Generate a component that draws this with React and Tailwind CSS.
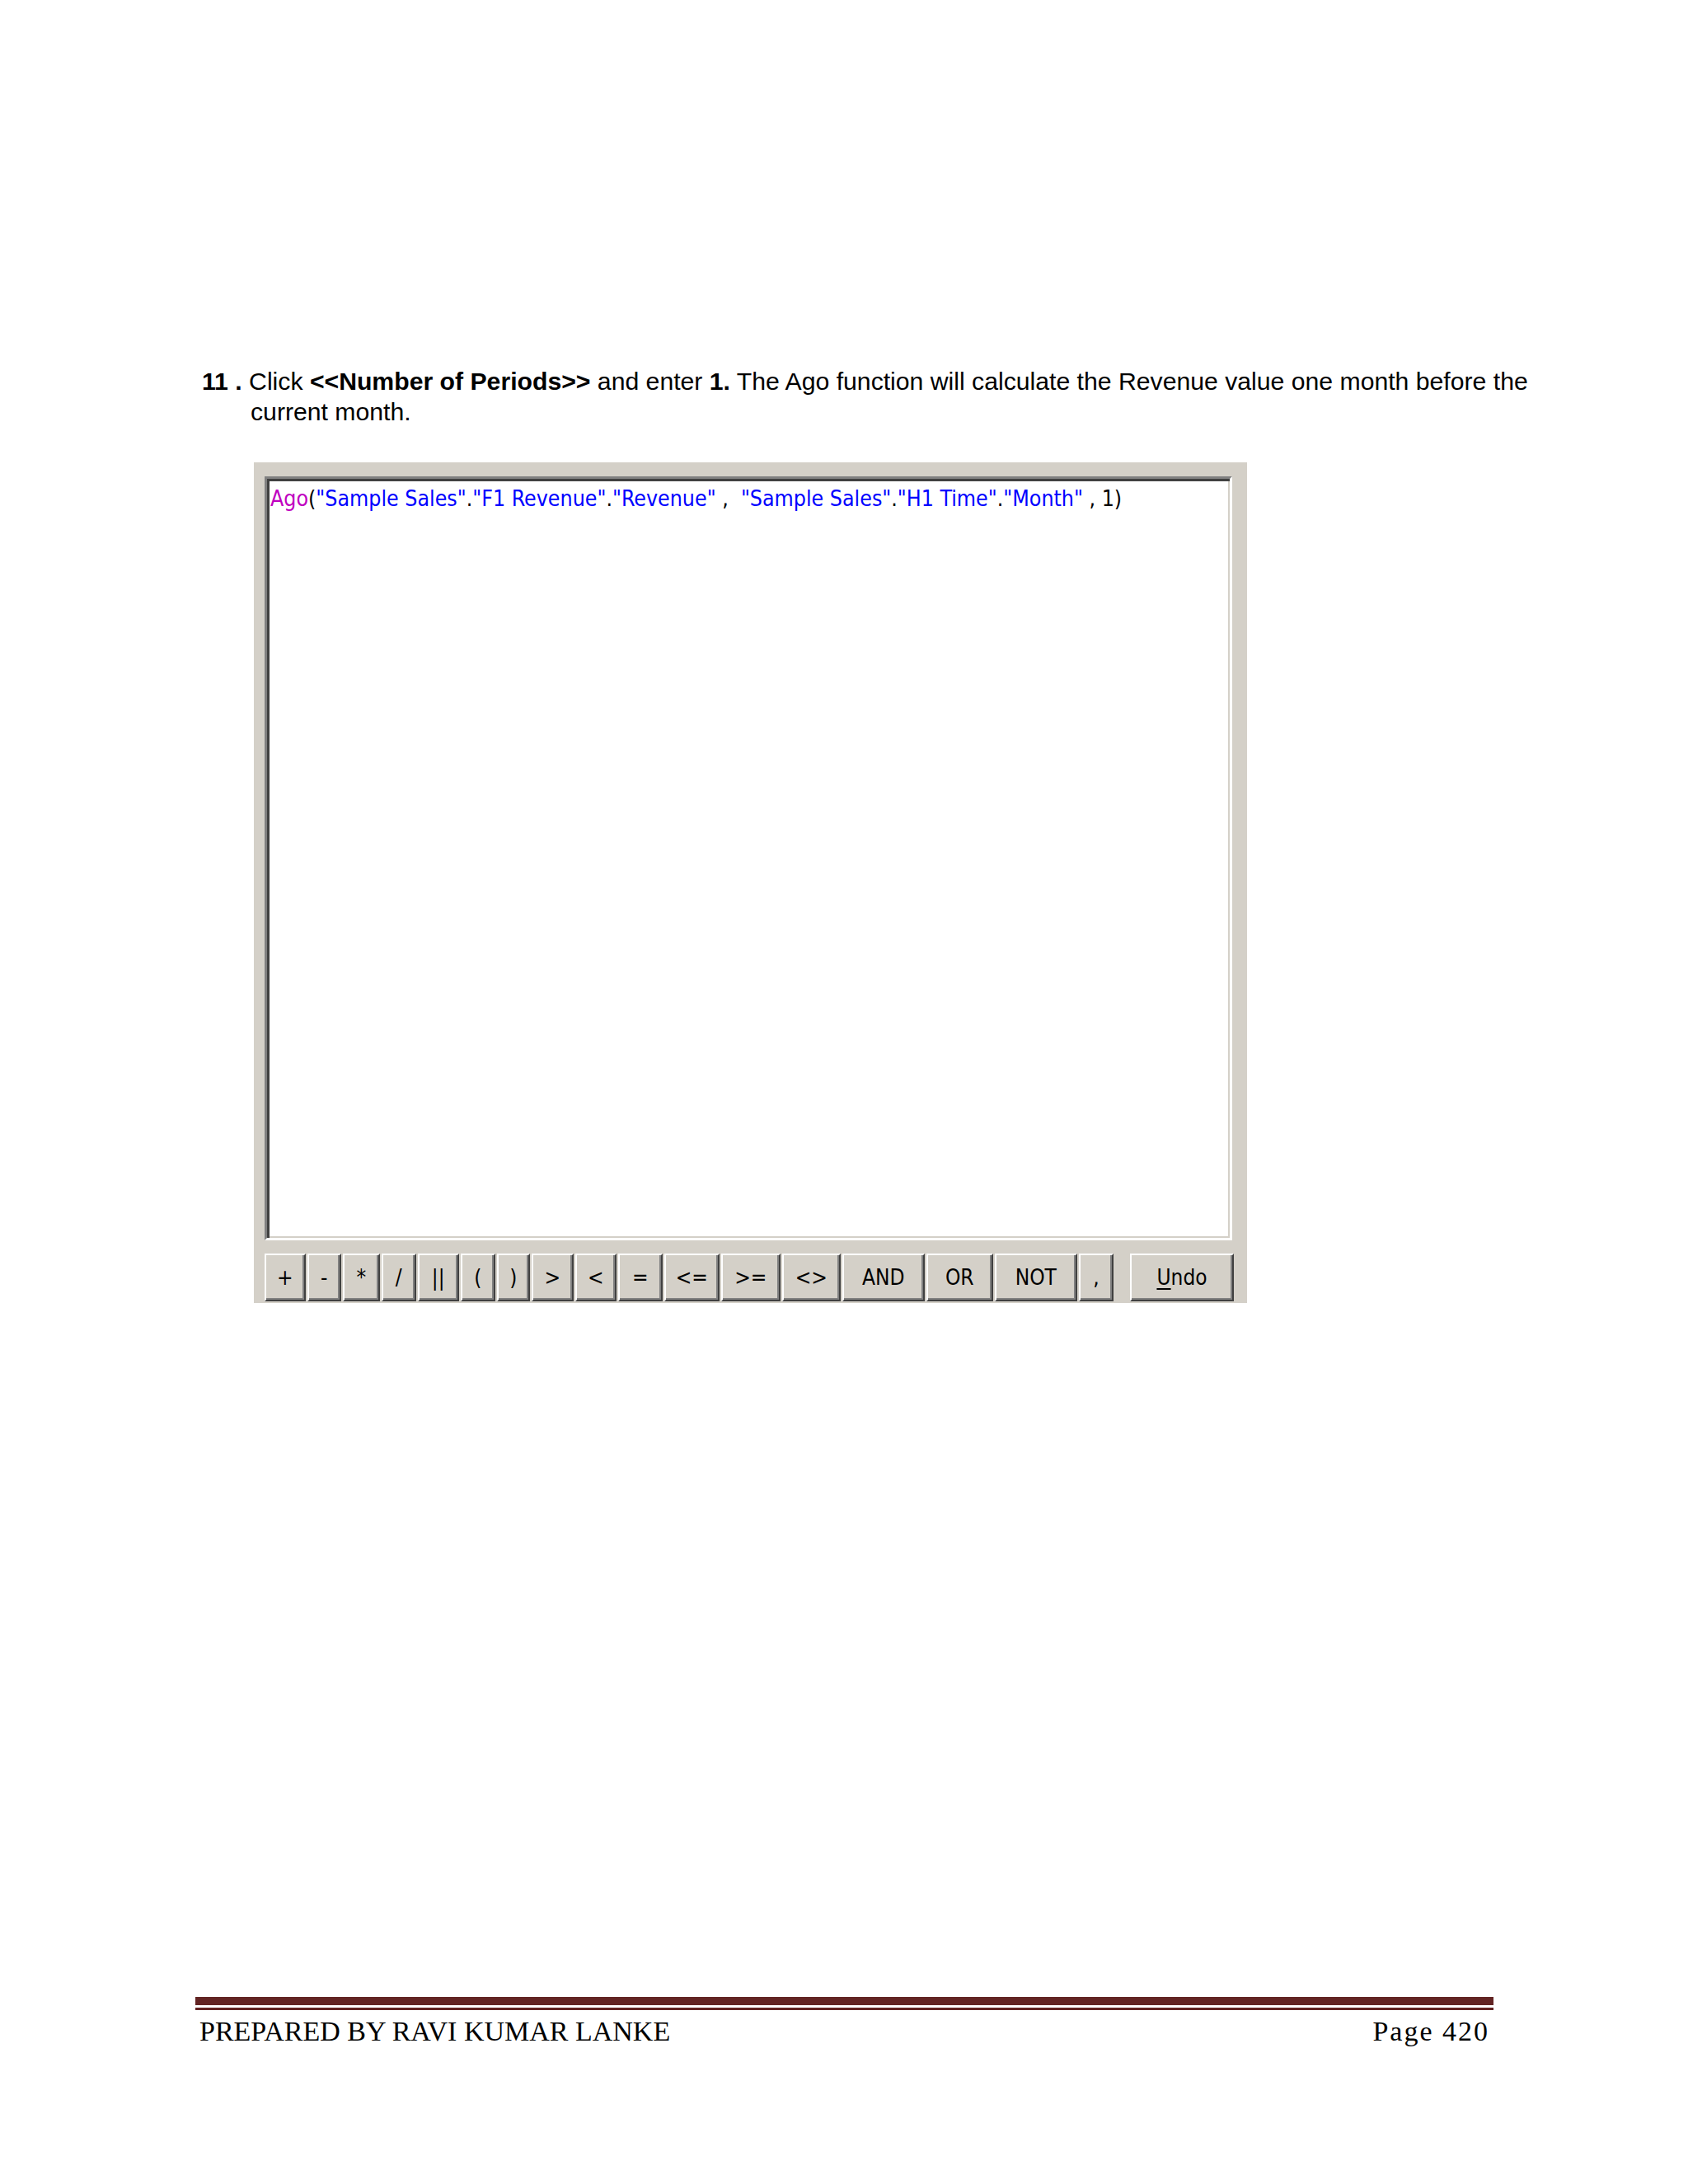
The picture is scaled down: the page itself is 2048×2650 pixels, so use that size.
import React from "react";

const buttons = [
  { label: "+", cls: "w-[49.5px]" },
  { label: "-", cls: "w-[40.5px]" },
  { label: "*", cls: "w-[44.5px]" },
  { label: "/", cls: "w-[41.5px]" },
  { label: "||", cls: "w-[49.5px]" },
  { label: "(", cls: "w-[41.5px]" },
  { label: ")", cls: "w-[39.5px]" },
  { label: ">", cls: "w-[50.5px]" },
  { label: "<", cls: "w-[49.5px]" },
  { label: "=", cls: "w-[53.5px]" },
  { label: "<=", cls: "w-[66.5px]" },
  { label: ">=", cls: "w-[71.5px]" },
  { label: "<>", cls: "w-[70.5px]" },
  { label: "AND", cls: "w-[99.5px]" },
  { label: "OR", cls: "w-[80.5px]" },
  { label: "NOT", cls: "w-[99.5px]" },
  { label: ",", cls: "w-[42px]" },
];

const btnBase =
  "h-[58px] flex items-center justify-center bg-[#d4d0c8] border-t-2 border-l-2 border-white border-r-2 border-b-2 border-r-[#404040] border-b-[#404040] shadow-[inset_-2px_-2px_0_#808080] text-black text-[26px] font-['DejaVu_Sans_Condensed','DejaVu_Sans',sans-serif]";

export default function App() {
  return (
    <div className="w-[2048px] h-[2650px] bg-white overflow-hidden flex flex-col">
      <div className="pt-[444px] pl-[245px] font-['Liberation_Sans',Arial,sans-serif] text-[30.2px] leading-[37px] text-black whitespace-nowrap">
        <div>
          <b>11 .</b> Click <b>&lt;&lt;Number of Periods&gt;&gt;</b> and enter{" "}
          <b>1.</b> The Ago function will calculate the Revenue value one month
          before the
        </div>
        <div className="pl-[59px]">current month.</div>
      </div>

      <div className="mt-[43px] ml-[308px] w-[1205px] h-[1020px] bg-[#d4d0c8] pt-[17px] pl-[13px] flex flex-col">
        <div className="w-[1174px] h-[927px] bg-white border-t-[3px] border-l-[3px] border-t-[#808080] border-l-[#808080] border-r-[3px] border-b-[3px] border-r-white border-b-white shadow-[inset_3px_3px_0_#404040,inset_-2px_-2px_0_#d4d0c8] pt-[8px] pl-[4px]">
          <div className="whitespace-pre text-[26.5px] leading-[32px] font-['DejaVu_Sans_Condensed','DejaVu_Sans',sans-serif] text-black">
            <span className="text-[#c000c0]">Ago</span>
            <span>(</span>
            <span className="text-[#0000ff]">"Sample Sales"</span>
            <span>.</span>
            <span className="text-[#0000ff]">"F1 Revenue"</span>
            <span>.</span>
            <span className="text-[#0000ff]">"Revenue"</span>
            <span> ,  </span>
            <span className="text-[#0000ff]">"Sample Sales"</span>
            <span>.</span>
            <span className="text-[#0000ff]">"H1 Time"</span>
            <span>.</span>
            <span className="text-[#0000ff]">"Month"</span>
            <span> , 1)</span>
          </div>
        </div>

        <div className="mt-[16px] flex gap-[2.5px]">
          {buttons.map((b) => (
            <div key={b.label} className={`${btnBase} ${b.cls}`}>
              {b.label}
            </div>
          ))}
          <div className={`${btnBase} w-[126px] ml-[17.5px]`}>
            <span>
              <span className="underline underline-offset-4 decoration-2">U</span>ndo
            </span>
          </div>
        </div>
      </div>

      <div className="mt-[842px] ml-[237px] w-[1575px]">
        <div className="h-[10px] bg-[#622423]" />
        <div className="mt-[3px] h-[3px] bg-[#622423]" />
        <div className="mt-[6px] px-[5px] flex justify-between font-['Liberation_Serif','Times_New_Roman',serif] text-[34px] leading-[40px] text-black">
          <span>PREPARED BY RAVI KUMAR LANKE</span>
          <span className="tracking-[2px]">Page 420</span>
        </div>
      </div>
    </div>
  );
}
